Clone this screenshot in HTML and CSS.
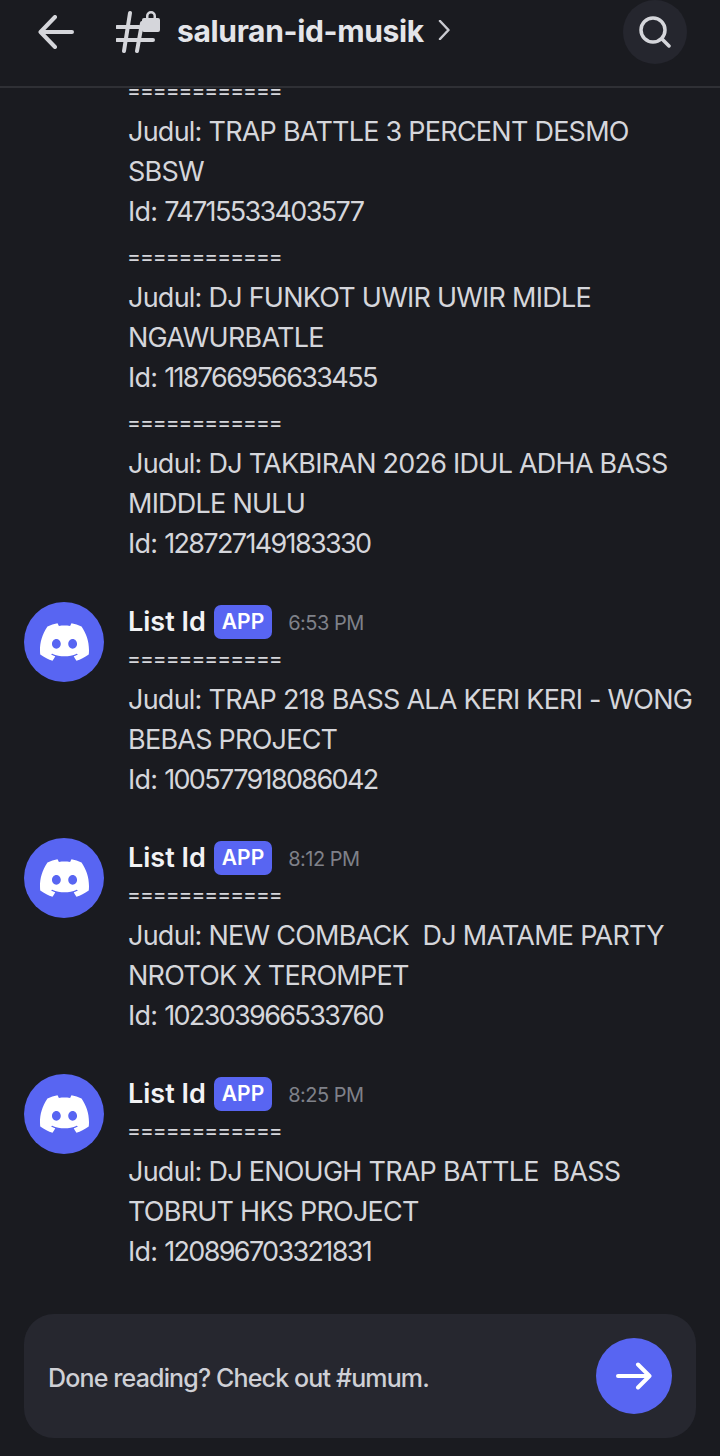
FILE: index.html
```html
<!DOCTYPE html>
<html>

<head>
    <title>saluran-id-musik</title>
    <link rel="stylesheet" href="styles.css">
</head>

<body>
    <svg class="defs">
        <symbol id="clyde" viewBox="0 0 24 18.4">
            <path transform="translate(0 -2.8)" d="M20.317 4.3698a19.7913 19.7913 0 00-4.8851-1.5152.0741.0741 0 00-.0785.0371c-.211.3753-.4447.8648-.6083 1.2495-1.8447-.2762-3.68-.2762-5.4868 0-.1636-.3933-.4058-.8742-.6177-1.2495a.077.077 0 00-.0785-.037 19.7363 19.7363 0 00-4.8852 1.515.0699.0699 0 00-.0321.0277C.5334 9.0458-.319 13.5799.0992 18.0578a.0824.0824 0 00.0312.0561c2.0528 1.5076 4.0413 2.4228 5.9929 3.0294a.0777.0777 0 00.0842-.0276c.4616-.6304.8731-1.2952 1.226-1.9942a.076.076 0 00-.0416-.1057c-.6528-.2476-1.2743-.5495-1.8722-.8923a.077.077 0 01-.0076-.1277c.1258-.0943.2517-.1923.3718-.2914a.0743.0743 0 01.0776-.0105c3.9278 1.7933 8.18 1.7933 12.0614 0a.0739.0739 0 01.0785.0095c.1202.099.246.1981.3728.2924a.077.077 0 01-.0066.1276 12.2986 12.2986 0 01-1.873.8914.0766.0766 0 00-.0407.1067c.3604.698.7719 1.3628 1.225 1.9932a.076.076 0 00.0842.0286c1.961-.6067 3.9495-1.5219 6.0023-3.0294a.077.077 0 00.0313-.0552c.5004-5.177-.8382-9.6739-3.5485-13.6604a.061.061 0 00-.0312-.0286zM8.02 15.3312c-1.1825 0-2.1569-1.0857-2.1569-2.419 0-1.3332.9555-2.4189 2.157-2.4189 1.2108 0 2.1757 1.0952 2.1568 2.419 0 1.3332-.9555 2.4189-2.1569 2.4189zm7.9748 0c-1.1825 0-2.1569-1.0857-2.1569-2.419 0-1.3332.9554-2.4189 2.1569-2.4189 1.2108 0 2.1757 1.0952 2.1568 2.419 0 1.3332-.946 2.4189-2.1568 2.4189Z" />
        </symbol>
    </svg>

    <div class="app">
        <header class="topbar">
            <svg class="back-icon" viewBox="0 0 36 34">
                <path d="M34 17H3M17 2L2.500 17 17 32" />
            </svg>
            <svg class="channel-icon" viewBox="0 0 44 44">
                <path class="hash" d="M14 4L8 42M26 14L21 42M1 18H23M1 31H37" />
                <path class="lock" d="M28 9h2v-2a5 5 0 0 1 10 0v2h2a2 2 0 0 1 2 2v10a2 2 0 0 1-2 2H28a2 2 0 0 1-2-2V11a2 2 0 0 1 2-2zM32.500 9h5V7a2.500 2.500 0 0 0-5 0z" />
            </svg>
            <span class="channel-name">saluran-id-musik</span>
            <svg class="chevron" viewBox="0 0 12 20">
                <path d="M2 1L10.500 10 2 19" />
            </svg>
            <div class="search-btn">
                <svg viewBox="0 0 32 32">
                    <circle cx="14" cy="14" r="12" />
                    <path d="M23 23L30 30" />
                </svg>
            </div>
        </header>

        <main class="messages">
            <div class="message">
                <div class="message-body">
                    <p><span class="rule">============</span><br>Judul: TRAP BATTLE 3 PERCENT DESMO<br>SBSW<br>Id: <span class="num">74715533403577</span></p>
                    <p><span class="rule">============</span><br>Judul: DJ FUNKOT UWIR UWIR MIDLE<br>NGAWURBATLE<br>Id: <span class="num">118766956633455</span></p>
                    <p><span class="rule">============</span><br>Judul: DJ TAKBIRAN 2026 IDUL ADHA BASS<br>MIDDLE NULU<br>Id: <span class="num">128727149183330</span></p>
                </div>
            </div>

            <div class="message">
                <div class="avatar"><svg><use href="#clyde" /></svg></div>
                <div class="message-body">
                    <div class="message-head">
                        <span class="author">List Id</span>
                        <span class="badge">APP</span>
                        <span class="time">6:53 PM</span>
                    </div>
                    <p><span class="rule">============</span><br>Judul: TRAP 218 BASS ALA KERI KERI - WONG<br>BEBAS PROJECT<br>Id: <span class="num">100577918086042</span></p>
                </div>
            </div>

            <div class="message">
                <div class="avatar"><svg><use href="#clyde" /></svg></div>
                <div class="message-body">
                    <div class="message-head">
                        <span class="author">List Id</span>
                        <span class="badge">APP</span>
                        <span class="time">8:12 PM</span>
                    </div>
                    <p><span class="rule">============</span><br>Judul: NEW COMBACK  DJ MATAME PARTY<br>NROTOK X TEROMPET<br>Id: <span class="num">102303966533760</span></p>
                </div>
            </div>

            <div class="message">
                <div class="avatar"><svg><use href="#clyde" /></svg></div>
                <div class="message-body">
                    <div class="message-head">
                        <span class="author">List Id</span>
                        <span class="badge">APP</span>
                        <span class="time">8:25 PM</span>
                    </div>
                    <p><span class="rule">============</span><br>Judul: DJ ENOUGH TRAP BATTLE  BASS<br>TOBRUT HKS PROJECT<br>Id: <span class="num">120896703321831</span></p>
                </div>
            </div>
        </main>

        <footer class="next-bar">
            <span class="next-text">Done reading? Check out #umum.</span>
            <div class="next-btn">
                <svg viewBox="0 0 36 28">
                    <path d="M2 14H33M22 2.500L33.500 14 22 25.500" />
                </svg>
            </div>
        </footer>
    </div>
</body>

</html>
```

FILE: styles.css
```css
* {
    box-sizing: border-box;
}

html,
body {
    margin: 0;
    height: 100%;
}

body {
    font-family: Inter, "Noto Sans", sans-serif;
    background-color: #1a1b20;
    color: #d5d6db;
}

.defs {
    display: none;
}

.app {
    display: flex;
    flex-direction: column;
    height: 1456px;
    overflow: hidden;
}

/* top bar */
.topbar {
    display: flex;
    align-items: flex-start;
    flex: 0 0 88px;
    padding-left: 38px;
    border-bottom: 2px solid #2f3035;
}

.back-icon {
    flex-shrink: 0;
    width: 36px;
    height: 34px;
    margin-top: 15px;
    fill: none;
    stroke: #d5d6db;
    stroke-width: 4;
    stroke-linecap: round;
    stroke-linejoin: round;
}

.channel-icon {
    flex-shrink: 0;
    width: 44px;
    height: 44px;
    margin: 9px 0 0 42px;
}

.channel-icon .hash {
    fill: none;
    stroke: #d5d6db;
    stroke-width: 4;
    stroke-linecap: round;
}

.channel-icon .lock {
    fill: #d5d6db;
    fill-rule: evenodd;
}

.channel-name {
    margin: 13px 0 0 17px;
    font-size: 30px;
    line-height: 36px;
    font-weight: 700;
    letter-spacing: -0.35px;
    color: #e4e5e9;
}

.chevron {
    flex-shrink: 0;
    width: 12px;
    height: 20px;
    margin: 20px 0 0 14px;
    fill: none;
    stroke: #c9cad0;
    stroke-width: 2.500;
    stroke-linecap: round;
    stroke-linejoin: round;
}

.search-btn {
    display: flex;
    align-items: center;
    justify-content: center;
    width: 64px;
    height: 64px;
    margin-left: auto;
    margin-right: 33px;
    border-radius: 50%;
    background-color: #25262e;
}

.search-btn svg {
    width: 32px;
    height: 32px;
    fill: none;
    stroke: #d5d6db;
    stroke-width: 3.500;
    stroke-linecap: round;
}

/* messages */
.messages {
    display: flex;
    flex-direction: column;
    justify-content: flex-end;
    flex: 1;
    min-height: 0;
    overflow: hidden;
    padding: 0 24px 42px;
}

.message {
    display: flex;
    flex-shrink: 0;
    gap: 24px;
    margin-top: 38px;
}

.message:first-child .message-body {
    margin-left: 104px;
}

.avatar {
    display: flex;
    align-items: center;
    justify-content: center;
    flex: 0 0 80px;
    height: 80px;
    border-radius: 50%;
    background-color: #5865f2;
}

.avatar svg {
    width: 49px;
    height: 38px;
    fill: #ffffff;
}

.message-body p {
    margin: 0 0 6px;
    font-size: 27px;
    line-height: 40px;
    letter-spacing: -0.76px;
    white-space: pre;
}

.message-body p:last-child {
    margin-bottom: 0;
}

.rule {
    margin-left: -1px;
    font-size: 21px;
    line-height: 1;
    letter-spacing: -1px;
    vertical-align: 3px;
}

.num {
    letter-spacing: -1.65px;
}

.message-head {
    display: flex;
    align-items: center;
    height: 38px;
}

.author {
    font-size: 27px;
    font-weight: 600;
    color: #f2f3f5;
}

.badge {
    margin: 1px 0 0 8px;
    padding: 0 8px;
    height: 34px;
    line-height: 34px;
    border-radius: 7px;
    font-size: 21px;
    font-weight: 600;
    color: #ffffff;
    background-color: #5865f2;
}

.time {
    margin: 4px 0 0 16px;
    font-size: 20px;
    letter-spacing: -0.5px;
    color: #7f8189;
}

/* bottom bar */
.next-bar {
    display: flex;
    align-items: center;
    justify-content: space-between;
    flex: 0 0 124px;
    margin: 0 24px 18px;
    padding: 0 24px;
    border-radius: 30px;
    background-color: #26272f;
}

.next-text {
    padding-top: 3px;
    font-size: 25px;
    font-weight: 500;
    letter-spacing: -0.85px;
    color: #cfd0d6;
}

.next-btn {
    display: flex;
    align-items: center;
    justify-content: center;
    width: 76px;
    height: 76px;
    border-radius: 50%;
    background-color: #5865f2;
}

.next-btn svg {
    width: 36px;
    height: 28px;
    fill: none;
    stroke: #ffffff;
    stroke-width: 4;
    stroke-linecap: round;
    stroke-linejoin: round;
}
```
